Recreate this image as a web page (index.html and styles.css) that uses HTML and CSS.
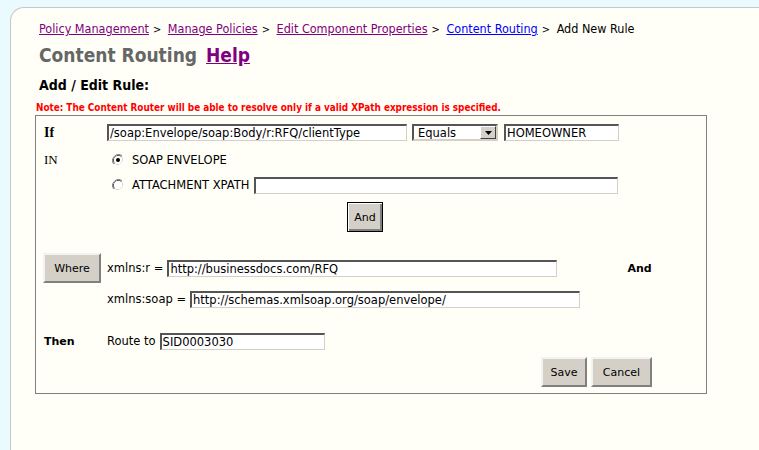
FILE: index.html
```html
<!DOCTYPE html>
<html>
<head>
<meta charset="utf-8">
<link rel="stylesheet" href="styles.css">
</head>
<body>
<div class="panel">
  <div class="crumbs">
    <a class="visited" href="#">Policy Management</a><span class="sep">&gt;</span>
    <a class="visited" href="#">Manage Policies</a><span class="sep">&gt;</span>
    <a class="visited" href="#">Edit Component Properties</a><span class="sep">&gt;</span>
    <a class="fresh" href="#">Content Routing</a><span class="sep">&gt;</span>
    <span class="here">Add New Rule</span>
  </div>
  <h1 class="title">Content Routing <a class="help" href="#">Help</a></h1>
  <h2 class="sub">Add / Edit Rule:</h2>
  <div class="note">Note: The Content Router will be able to resolve only if a valid XPath expression is specified.</div>
  <div class="box">
    <div class="row r-if">
      <span class="lbl serif-b">If</span>
      <input class="field w-xpath" type="text" value="/soap:Envelope/soap:Body/r:RFQ/clientType">
      <span class="sel">
        <select class="field w-sel"><option>Equals</option></select>
        <span class="arrow"><svg width="7" height="4" viewBox="0 0 7 4"><path d="M0 0h7L3.5 4z" fill="#000"/></svg></span>
      </span>
      <input class="field w-val" type="text" value="HOMEOWNER">
    </div>
    <div class="row r-in">
      <span class="lbl serif">IN</span>
      <span class="radio on"><svg width="12" height="12" viewBox="0 0 12 12"><path d="M10.2 1.8A6 6 0 0 0 1.8 10.2" fill="none" stroke="#808080" stroke-width="1"/><path d="M9.5 2.5A5 5 0 0 0 2.5 9.5" fill="none" stroke="#404040" stroke-width="1"/><path d="M1.8 10.2A6 6 0 0 0 10.2 1.8" fill="none" stroke="#ffffff" stroke-width="1"/><path d="M2.5 9.5A5 5 0 0 0 9.5 2.5" fill="none" stroke="#d4d0c8" stroke-width="1"/><circle cx="6" cy="6" r="4" fill="#fff"/><circle cx="6" cy="6" r="2" fill="#000"/></svg></span>
      <span class="opt">SOAP ENVELOPE</span>
    </div>
    <div class="row r-att">
      <span class="lbl"></span>
      <span class="radio"><svg width="12" height="12" viewBox="0 0 12 12"><path d="M10.2 1.8A6 6 0 0 0 1.8 10.2" fill="none" stroke="#808080" stroke-width="1"/><path d="M9.5 2.5A5 5 0 0 0 2.5 9.5" fill="none" stroke="#404040" stroke-width="1"/><path d="M1.8 10.2A6 6 0 0 0 10.2 1.8" fill="none" stroke="#ffffff" stroke-width="1"/><path d="M2.5 9.5A5 5 0 0 0 9.5 2.5" fill="none" stroke="#d4d0c8" stroke-width="1"/><circle cx="6" cy="6" r="4" fill="#fff"/></svg></span>
      <span class="opt">ATTACHMENT XPATH</span>
      <input class="field w-att" type="text" value="">
    </div>
    <div class="row r-and">
      <button class="btn btn-def" type="button">And</button>
    </div>
    <div class="row r-where">
      <button class="btn btn-where" type="button">Where</button>
      <span class="txt">xmlns:r =</span>
      <input class="field w-ns" type="text" value="http://businessdocs.com/RFQ">
      <span class="and-b">And</span>
    </div>
    <div class="row r-soap">
      <span class="lbl"></span>
      <span class="txt">xmlns:soap =</span>
      <input class="field w-ns" type="text" value="http://schemas.xmlsoap.org/soap/envelope/">
    </div>
    <div class="row r-then">
      <span class="lbl sans-b">Then</span>
      <span class="txt">Route to</span>
      <input class="field w-route" type="text" value="SID0003030">
    </div>
    <div class="row r-actions">
      <button class="btn btn-save" type="button">Save</button>
      <button class="btn btn-cancel" type="button">Cancel</button>
    </div>
  </div>
</div>
</body>
</html>
```

FILE: styles.css
```css
html, body {
  margin: 0;
  padding: 0;
  background: #eafbff;
  height: 100%;
}
body {
  padding: 7px 0 0 10px;
  box-sizing: border-box;
  font-family: "DejaVu Sans Condensed", "DejaVu Sans", sans-serif;
  color: #000;
  overflow: hidden;
}
.panel {
  background: #fffff7;
  border-top: 1px solid #c4c8c8;
  border-left: 1px solid #c4c8c8;
  border-top-left-radius: 14px;
  height: 100%;
  box-sizing: border-box;
  padding: 14px 0 0 24px;
}
.crumbs {
  font-size: 12.5px;
  line-height: 14px;
  padding-left: 4px;
  height: 14px;
}
.crumbs a { text-decoration: underline; }
.crumbs .visited { color: #800080; }
.crumbs .fresh { color: #0000ff; }
.crumbs .sep { margin: 0 3px 0 4px; font-size: 11px; }
.here { color: #000; }
.title {
  margin: 8px 0 0 0;
  padding-left: 4px;
  font-size: 19px;
  line-height: 22px;
  font-weight: bold;
  color: #666666;
}
.help {
  color: #800080;
  margin-left: 3px;
  font-size: 19px;
  text-decoration: underline;
}
.sub {
  margin: 11px 0 0 0;
  padding-left: 4px;
  font-size: 14px;
  line-height: 16px;
  font-weight: bold;
}
.note {
  margin-top: 9px;
  padding-left: 1px;
  font-size: 9.85px;
  line-height: 12px;
  font-weight: bold;
  color: #ff0000;
}
.box {
  margin-top: 1px;
  width: 672px;
  box-sizing: border-box;
  border: 1px solid #808080;
  padding: 0 54px 6px 7px;
  font-family: "DejaVu Sans", sans-serif;
  font-size: 11.5px;
}
.row {
  display: flex;
  align-items: center;
}
.lbl {
  width: 64px;
  flex: none;
  padding-left: 1px;
  box-sizing: border-box;
}
.serif-b { font-family: "Liberation Serif", serif; font-weight: bold; font-size: 14px; }
.serif { font-family: "Liberation Serif", serif; font-size: 13px; }
.sans-b { font-weight: bold; font-size: 11px; }

.field {
  font-family: "DejaVu Sans", sans-serif;
  font-size: 11.5px;
  height: 17px;
  box-sizing: border-box;
  padding: 0 2px 0 1px;
  margin: 0;
  background: #ffffff;
  color: #000;
  border-style: solid;
  border-width: 2px 1px 1px 2px;
  border-color: #555555 #d4d0c8 #d4d0c8 #555555;
  outline: none;
}
.r-if { margin-top: 8px; height: 17px; }
.w-xpath { width: 300px; }
.sel { position: relative; margin-left: 5px; display: block; height: 17px; }
.w-sel {
  width: 86px;
  appearance: none;
  -webkit-appearance: none;
  padding-left: 4px;
  border-width: 2px;
  border-color: #555555 #d4d0c8 #d4d0c8 #555555;
  display: block;
}
.arrow {
  position: absolute;
  right: 2px;
  top: 2px;
  width: 16px;
  height: 13px;
  box-sizing: border-box;
  background: #d4d0c8;
  border-style: solid;
  border-width: 1px;
  border-color: #ffffff #404040 #404040 #ffffff;
  display: flex;
  align-items: center;
  justify-content: center;
}
.w-val { width: 115px; margin-left: 6px; }

.r-in { margin-top: 10px; height: 18px; }
.radio { width: 12px; height: 12px; margin-left: 5px; display: block; }
.radio svg { display: block; }
.opt { margin-left: 8px; }
.r-att { margin-top: 7px; height: 18px; }
.w-att { width: 364px; margin-left: 5px; }

.btn {
  font-family: "DejaVu Sans", sans-serif;
  font-size: 11px;
  color: #000;
  background: #d4d0c8;
  height: 30px;
  margin: 0;
  padding: 0;
  box-sizing: border-box;
  border-style: solid;
  border-width: 2px;
  border-color: #f4f2ee #808080 #808080 #f4f2ee;
  cursor: default;
}
.r-and { margin-top: 8px; height: 30px; }
.btn-def {
  margin-left: 304px;
  width: 36px;
  border: 1px solid #000;
  box-shadow: inset 1px 1px 0 #ffffff, inset -2px -2px 0 #808080;
}
.r-where { margin-top: 21px; height: 30px; }
.btn-where { width: 58px; margin-right: 6px; margin-left: 0; }
.txt { margin-right: 4px; }
.w-ns { width: 390px; }
.and-b { font-weight: bold; font-size: 11px; margin-left: 70px; }
.r-soap { margin-top: 7px; height: 18px; }
.r-then { margin-top: 24px; height: 18px; }
.w-route { width: 165px; }
.r-actions { margin-top: 7px; height: 30px; justify-content: flex-end; }
.btn-save { width: 46px; }
.btn-cancel { width: 61px; margin-left: 4px; }
```
